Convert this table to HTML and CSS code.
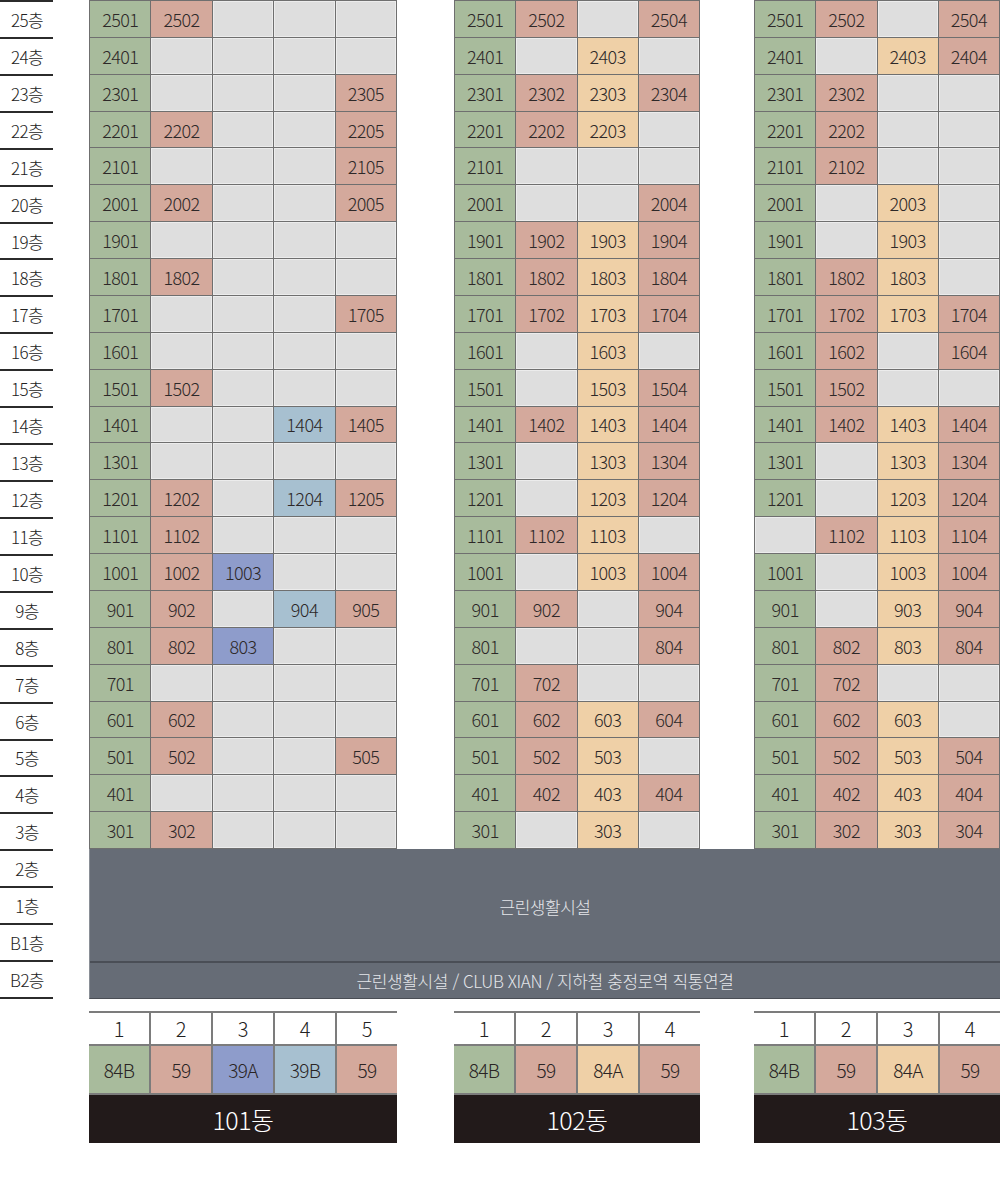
FILE: index.html
```html
<!DOCTYPE html>
<html lang="ko">
<head>
<meta charset="utf-8">
<title>동호수 배치도</title>
<link rel="stylesheet" href="styles.css">
</head>
<body>
<div class="page">
  <div class="floors">
    <div class="fl">25층</div><div class="fl">24층</div><div class="fl">23층</div><div class="fl">22층</div><div class="fl">21층</div>
    <div class="fl">20층</div><div class="fl">19층</div><div class="fl">18층</div><div class="fl">17층</div><div class="fl">16층</div>
    <div class="fl">15층</div><div class="fl">14층</div><div class="fl">13층</div><div class="fl">12층</div><div class="fl">11층</div>
    <div class="fl">10층</div><div class="fl">9층</div><div class="fl">8층</div><div class="fl">7층</div><div class="fl">6층</div>
    <div class="fl">5층</div><div class="fl">4층</div><div class="fl">3층</div><div class="fl">2층</div><div class="fl">1층</div>
    <div class="fl">B1층</div><div class="fl">B2층</div>
  </div>
  <div class="main">
    <div class="towers">
      <div class="bldg cols5 w101">
        <span class="g">2501</span><span class="r">2502</span><span></span><span></span><span></span>
        <span class="g">2401</span><span></span><span></span><span></span><span></span>
        <span class="g">2301</span><span></span><span></span><span></span><span class="r">2305</span>
        <span class="g">2201</span><span class="r">2202</span><span></span><span></span><span class="r">2205</span>
        <span class="g">2101</span><span></span><span></span><span></span><span class="r">2105</span>
        <span class="g">2001</span><span class="r">2002</span><span></span><span></span><span class="r">2005</span>
        <span class="g">1901</span><span></span><span></span><span></span><span></span>
        <span class="g">1801</span><span class="r">1802</span><span></span><span></span><span></span>
        <span class="g">1701</span><span></span><span></span><span></span><span class="r">1705</span>
        <span class="g">1601</span><span></span><span></span><span></span><span></span>
        <span class="g">1501</span><span class="r">1502</span><span></span><span></span><span></span>
        <span class="g">1401</span><span></span><span></span><span class="l">1404</span><span class="r">1405</span>
        <span class="g">1301</span><span></span><span></span><span></span><span></span>
        <span class="g">1201</span><span class="r">1202</span><span></span><span class="l">1204</span><span class="r">1205</span>
        <span class="g">1101</span><span class="r">1102</span><span></span><span></span><span></span>
        <span class="g">1001</span><span class="r">1002</span><span class="b">1003</span><span></span><span></span>
        <span class="g">901</span><span class="r">902</span><span></span><span class="l">904</span><span class="r">905</span>
        <span class="g">801</span><span class="r">802</span><span class="b">803</span><span></span><span></span>
        <span class="g">701</span><span></span><span></span><span></span><span></span>
        <span class="g">601</span><span class="r">602</span><span></span><span></span><span></span>
        <span class="g">501</span><span class="r">502</span><span></span><span></span><span class="r">505</span>
        <span class="g">401</span><span></span><span></span><span></span><span></span>
        <span class="g">301</span><span class="r">302</span><span></span><span></span><span></span>
      </div>
      <div class="bldg cols4 w102">
        <span class="g">2501</span><span class="r">2502</span><span></span><span class="r">2504</span>
        <span class="g">2401</span><span></span><span class="o">2403</span><span></span>
        <span class="g">2301</span><span class="r">2302</span><span class="o">2303</span><span class="r">2304</span>
        <span class="g">2201</span><span class="r">2202</span><span class="o">2203</span><span></span>
        <span class="g">2101</span><span></span><span></span><span></span>
        <span class="g">2001</span><span></span><span></span><span class="r">2004</span>
        <span class="g">1901</span><span class="r">1902</span><span class="o">1903</span><span class="r">1904</span>
        <span class="g">1801</span><span class="r">1802</span><span class="o">1803</span><span class="r">1804</span>
        <span class="g">1701</span><span class="r">1702</span><span class="o">1703</span><span class="r">1704</span>
        <span class="g">1601</span><span></span><span class="o">1603</span><span></span>
        <span class="g">1501</span><span></span><span class="o">1503</span><span class="r">1504</span>
        <span class="g">1401</span><span class="r">1402</span><span class="o">1403</span><span class="r">1404</span>
        <span class="g">1301</span><span></span><span class="o">1303</span><span class="r">1304</span>
        <span class="g">1201</span><span></span><span class="o">1203</span><span class="r">1204</span>
        <span class="g">1101</span><span class="r">1102</span><span class="o">1103</span><span></span>
        <span class="g">1001</span><span></span><span class="o">1003</span><span class="r">1004</span>
        <span class="g">901</span><span class="r">902</span><span></span><span class="r">904</span>
        <span class="g">801</span><span></span><span></span><span class="r">804</span>
        <span class="g">701</span><span class="r">702</span><span></span><span></span>
        <span class="g">601</span><span class="r">602</span><span class="o">603</span><span class="r">604</span>
        <span class="g">501</span><span class="r">502</span><span class="o">503</span><span></span>
        <span class="g">401</span><span class="r">402</span><span class="o">403</span><span class="r">404</span>
        <span class="g">301</span><span></span><span class="o">303</span><span></span>
      </div>
      <div class="bldg cols4 w103">
        <span class="g">2501</span><span class="r">2502</span><span></span><span class="r">2504</span>
        <span class="g">2401</span><span></span><span class="o">2403</span><span class="r">2404</span>
        <span class="g">2301</span><span class="r">2302</span><span></span><span></span>
        <span class="g">2201</span><span class="r">2202</span><span></span><span></span>
        <span class="g">2101</span><span class="r">2102</span><span></span><span></span>
        <span class="g">2001</span><span></span><span class="o">2003</span><span></span>
        <span class="g">1901</span><span></span><span class="o">1903</span><span></span>
        <span class="g">1801</span><span class="r">1802</span><span class="o">1803</span><span></span>
        <span class="g">1701</span><span class="r">1702</span><span class="o">1703</span><span class="r">1704</span>
        <span class="g">1601</span><span class="r">1602</span><span></span><span class="r">1604</span>
        <span class="g">1501</span><span class="r">1502</span><span></span><span></span>
        <span class="g">1401</span><span class="r">1402</span><span class="o">1403</span><span class="r">1404</span>
        <span class="g">1301</span><span></span><span class="o">1303</span><span class="r">1304</span>
        <span class="g">1201</span><span></span><span class="o">1203</span><span class="r">1204</span>
        <span></span><span class="r">1102</span><span class="o">1103</span><span class="r">1104</span>
        <span class="g">1001</span><span></span><span class="o">1003</span><span class="r">1004</span>
        <span class="g">901</span><span></span><span class="o">903</span><span class="r">904</span>
        <span class="g">801</span><span class="r">802</span><span class="o">803</span><span class="r">804</span>
        <span class="g">701</span><span class="r">702</span><span></span><span></span>
        <span class="g">601</span><span class="r">602</span><span class="o">603</span><span></span>
        <span class="g">501</span><span class="r">502</span><span class="o">503</span><span class="r">504</span>
        <span class="g">401</span><span class="r">402</span><span class="o">403</span><span class="r">404</span>
        <span class="g">301</span><span class="r">302</span><span class="o">303</span><span class="r">304</span>
      </div>
    </div>
    <div class="podium">
      <div class="pod-upper">근린생활시설</div>
      <div class="pod-lower">근린생활시설 / CLUB XIAN / 지하철 충정로역 직통연결</div>
    </div>
    <div class="legend">
      <div class="key w101">
        <div class="key-grid cols5">
          <span class="num">1</span><span class="num">2</span><span class="num">3</span><span class="num">4</span><span class="num">5</span>
          <span class="typ g">84B</span><span class="typ r">59</span><span class="typ b">39A</span><span class="typ l">39B</span><span class="typ r">59</span>
        </div>
        <div class="dong">101동</div>
      </div>
      <div class="key w102">
        <div class="key-grid cols4">
          <span class="num">1</span><span class="num">2</span><span class="num">3</span><span class="num">4</span>
          <span class="typ g">84B</span><span class="typ r">59</span><span class="typ o">84A</span><span class="typ r">59</span>
        </div>
        <div class="dong">102동</div>
      </div>
      <div class="key w103">
        <div class="key-grid cols4">
          <span class="num">1</span><span class="num">2</span><span class="num">3</span><span class="num">4</span>
          <span class="typ g">84B</span><span class="typ r">59</span><span class="typ o">84A</span><span class="typ r">59</span>
        </div>
        <div class="dong">103동</div>
      </div>
    </div>
  </div>
</div>
</body>
</html>
```
FILE: styles.css
```css
* { box-sizing: border-box; }
html, body { margin: 0; padding: 0; background: #ffffff; }
body {
  font-family: "Noto Sans CJK KR", "Noto Sans", sans-serif;
  font-weight: 300;
  color: #2a2626;
}
.page {
  display: flex;
  align-items: flex-start;
  width: 1000px;
}
.floors {
  width: 53px;
  margin-right: 36px;
  height: 999px;
  display: grid;
  grid-template-rows: repeat(27, 1fr);
  border-top: 2px solid #2b2b2b;
}
.fl {
  display: flex;
  align-items: center;
  justify-content: center;
  border-bottom: 2px solid #2b2b2b;
  font-size: 17px;
  letter-spacing: -0.6px;
  color: #222;
  padding-left: 1px;
}
.main {
  width: 911px;
  display: flex;
  flex-direction: column;
}
.towers {
  display: flex;
  height: 849px;
}
.w101 { width: 308px; margin-right: 57px; }
.w102 { width: 246px; margin-right: 54px; }
.w103 { width: 246px; }
.bldg {
  display: grid;
  grid-template-rows: repeat(23, 1fr);
  gap: 1px;
  padding: 1px;
  background: #6f6f6f;
  height: 100%;
}
.cols5 { grid-template-columns: repeat(5, 1fr); }
.cols4 { grid-template-columns: repeat(4, 1fr); }
.bldg span {
  display: flex;
  align-items: center;
  justify-content: center;
  background: #dedede;
  font-size: 18px;
  letter-spacing: -0.6px;
  color: #2d2828;
  box-shadow: inset 0 0 0 1px #ececec;
}
.bldg span.g, .bldg span.r, .bldg span.o, .bldg span.b, .bldg span.l { box-shadow: none; }
.g { background: #a8bb9c !important; }
.r { background: #d4a99c !important; }
.o { background: #efd0a7 !important; }
.b { background: #8e9ccb !important; }
.l { background: #a7c0d0 !important; }
.podium {
  height: 150px;
  display: flex;
  flex-direction: column;
  background: #666c76;
  border-left: 1px solid #8a8f96;
  border-bottom: 1px solid #4a4e55;
  color: #e4e6ea;
}
.pod-upper {
  flex: 1;
  display: flex;
  align-items: center;
  justify-content: center;
  font-size: 17px;
  letter-spacing: -0.5px;
  padding-top: 2px;
}
.pod-lower {
  height: 37px;
  display: flex;
  align-items: center;
  justify-content: center;
  border-top: 2px solid #4a4e56;
  font-size: 17px;
  letter-spacing: -0.4px;
}
.legend {
  display: flex;
  margin-top: 12px;
}
.key-grid {
  display: grid;
  grid-template-rows: 31px 47px;
  column-gap: 2px;
  row-gap: 2px;
  background: #7c7c7c;
  border-top: 2px solid #7c7c7c;
  border-bottom: 2px solid #7c7c7c;
}
.num {
  background: #ffffff;
  display: flex;
  align-items: center;
  justify-content: center;
  font-size: 20px;
  color: #222;
}
.typ {
  display: flex;
  align-items: center;
  justify-content: center;
  font-size: 19px;
  letter-spacing: -0.6px;
  color: #2a2424;
}
.dong {
  height: 48px;
  background: #221a1a;
  color: #ffffff;
  display: flex;
  align-items: center;
  justify-content: center;
  font-size: 25px;
  letter-spacing: -0.5px;
}
```
